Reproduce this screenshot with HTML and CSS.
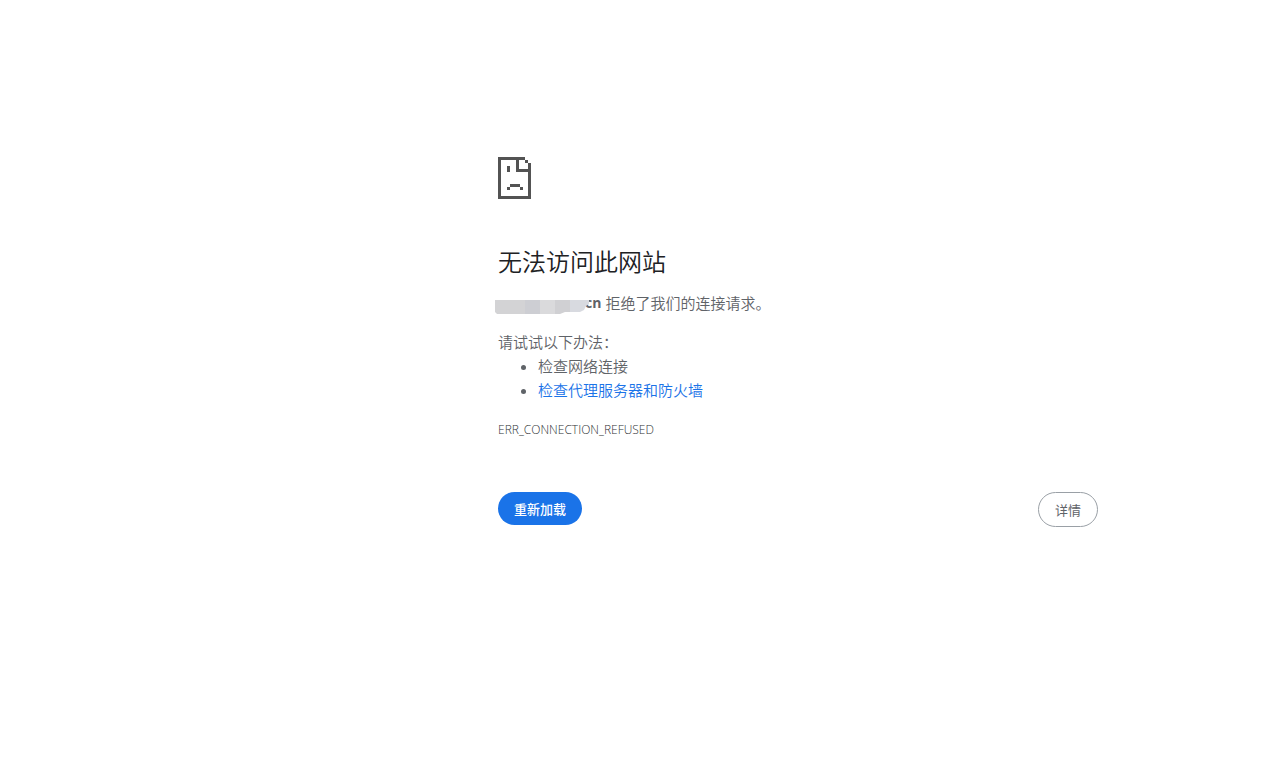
FILE: index.html
```
<!DOCTYPE html>
<html lang="zh-CN">
<head>
<meta charset="utf-8">
<meta name="viewport" content="width=device-width, initial-scale=1">
<title>无法访问此网站</title>
<link rel="stylesheet" href="styles.css">
</head>
<body>
<main class="error-page">
  <svg class="error-icon" viewBox="0 0 33 42" shape-rendering="crispEdges" aria-hidden="true">
    <path d="M0 0H27V3H3V39H30V15H18V3H21V12H30V6H33V42H0ZM27 3H30V6H27ZM9 9H12V15H9ZM12 27H22V30H12ZM9 30H12V33H9ZM22 30H25V33H22Z"/>
  </svg>
  <h1 class="title">无法访问此网站</h1>
  <p class="summary"><svg class="host-mask" viewBox="0 0 95 14" aria-hidden="true">
    <path fill="#d3d3d5" d="M0 0H15V14H2L0 12Z"/>
    <path fill="#d3d3d5" d="M15 0H30V14H15Z"/>
    <path fill="#cdced3" d="M30 0H45V14H30Z"/>
    <path fill="#dadadc" d="M45 0H60V14H45Z"/>
    <path fill="#d0d0d3" d="M60 0H75V12H70L65 14H60Z"/>
    <path fill="#d8dae0" d="M75 0H94V4L91 6L89 10L85 12H75Z"/>
  </svg><strong class="host">cn</strong><span>拒绝了我们的连接请求。</span></p>
  <section class="suggestions">
    <p class="suggestions-title">请试试以下办法：</p>
    <ul class="suggestions-list">
      <li>检查网络连接</li>
      <li><a class="link" href="#buttons">检查代理服务器和防火墙</a></li>
    </ul>
  </section>
  <p class="error-code">ERR_CONNECTION_REFUSED</p>
  <div class="buttons" id="buttons">
    <button class="button button-primary" type="button">重新加载</button>
    <button class="button button-secondary" type="button">详情</button>
  </div>
</main>
</body>
</html>
```
FILE: styles.css
```
body {
  margin: 0;
  background: #fff;
  color: #5f6368;
  font-family: "Open Sans", "Noto Sans CJK SC", sans-serif;
  font-size: 15px;
  font-weight: 350;
  line-height: 24px;
}

.error-page {
  box-sizing: border-box;
  max-width: 600px;
  margin-left: 39%;
  padding-top: 157px;
}

.error-icon {
  display: block;
  width: 33px;
  height: 42px;
  fill: #535353;
}

.title {
  margin: 48px 0 16px;
  color: #202124;
  font-family: "Noto Sans CJK SC", sans-serif;
  font-size: 24px;
  font-weight: 350;
  line-height: 28px;
}

.summary {
  display: flex;
  align-items: center;
  margin: 0 0 0 -3px;
}

.host-mask {
  z-index: 1;
  flex: none;
  width: 95px;
  height: 14px;
  margin-top: 8px;
  margin-right: -5px;
}

.host {
  margin-right: 4px;
  font-size: 14px;
  font-weight: 700;
}

.suggestions {
  margin-top: 15px;
}

.suggestions-title {
  margin: 0;
}

.suggestions-list {
  margin: 0;
  padding-left: 40px;
}

.link {
  color: #1a73e8;
  text-decoration: none;
}

.error-code {
  margin: 16px 0 0;
  color: #303336;
  font-size: 12px;
  font-weight: 300;
}

.buttons {
  display: flex;
  align-items: flex-start;
  justify-content: space-between;
  margin-top: 50px;
}

.button {
  padding: 8px 16px;
  border: 0;
  border-radius: 20px;
  font-family: "Noto Sans CJK SC", sans-serif;
  font-size: 13px;
  line-height: 17px;
  cursor: pointer;
}

.button-primary {
  background: #1a73e8;
  color: #fff;
  font-weight: 500;
}

.button-secondary {
  border: 1px solid #9aa0a6;
  background: #fff;
  color: #5f6368;
}
```
